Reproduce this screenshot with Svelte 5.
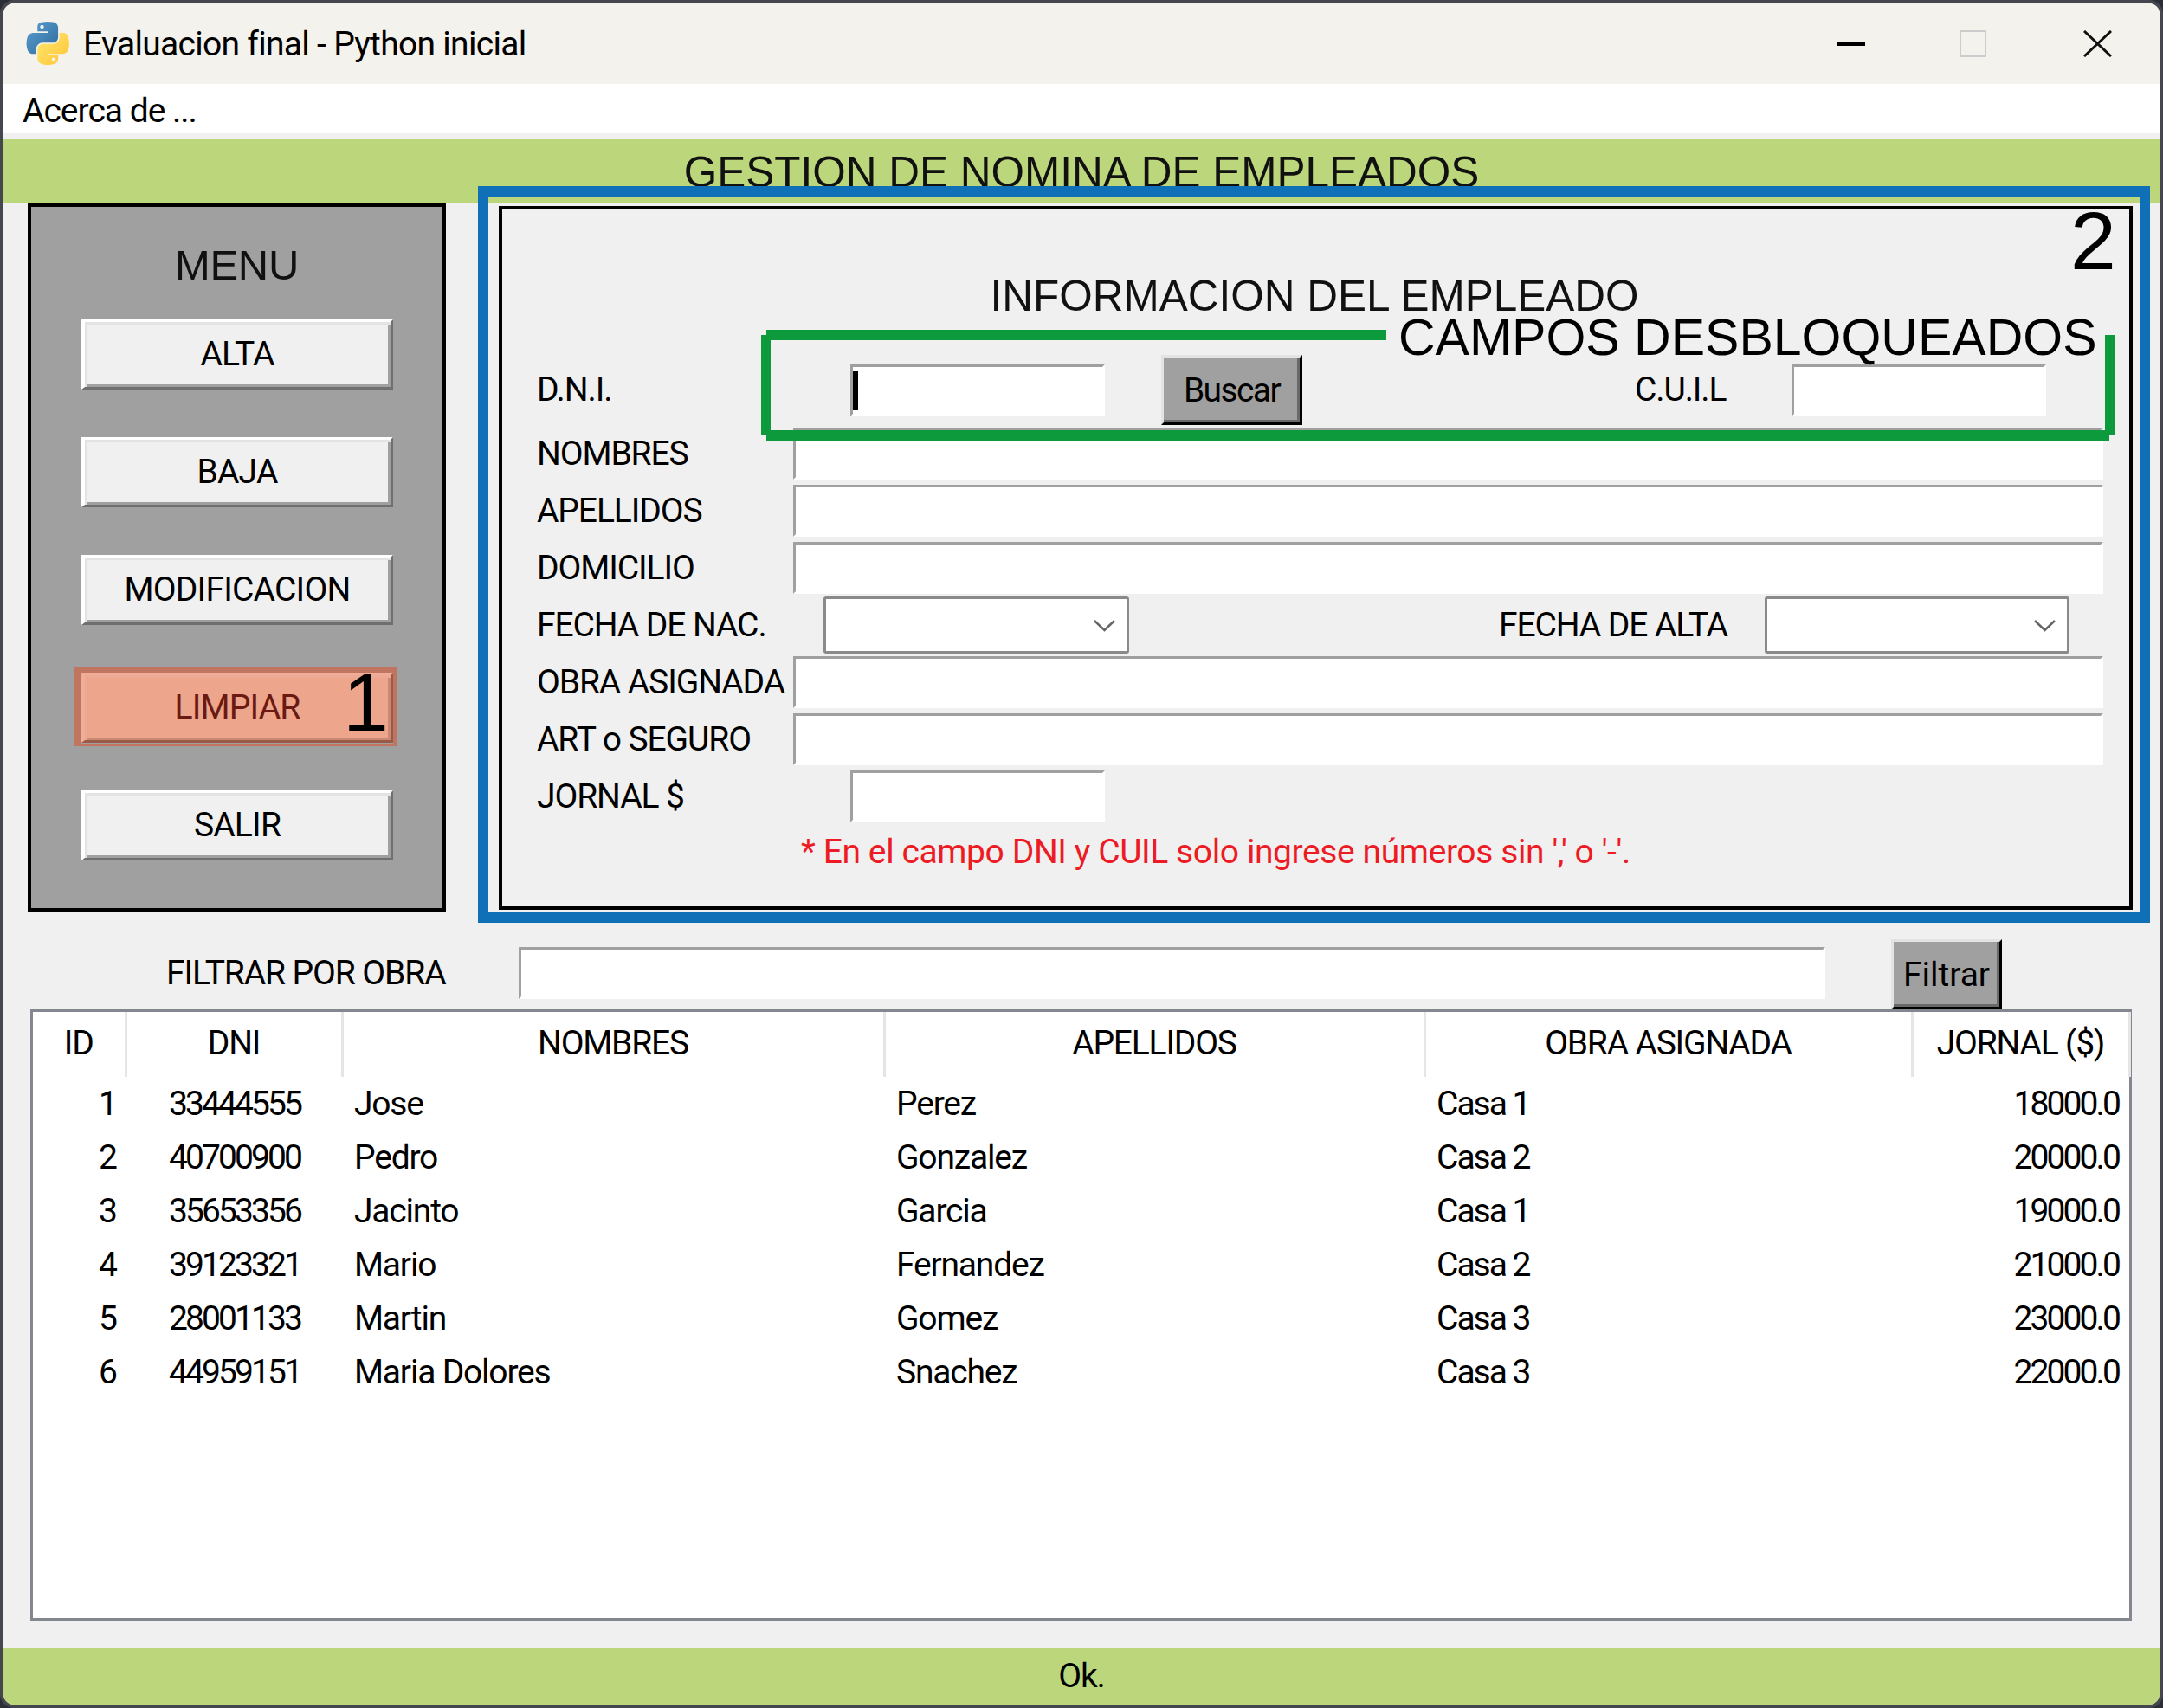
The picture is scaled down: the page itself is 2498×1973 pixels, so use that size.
<script>
  const rows = [
    [1, '33444555', 'Jose', 'Perez', 'Casa 1', '18000.0'],
    [2, '40700900', 'Pedro', 'Gonzalez', 'Casa 2', '20000.0'],
    [3, '35653356', 'Jacinto', 'Garcia', 'Casa 1', '19000.0'],
    [4, '39123321', 'Mario', 'Fernandez', 'Casa 2', '21000.0'],
    [5, '28001133', 'Martin', 'Gomez', 'Casa 3', '23000.0'],
    [6, '44959151', 'Maria Dolores', 'Snachez', 'Casa 3', '22000.0']
  ];
  const menu = ['ALTA', 'BAJA', 'MODIFICACION', 'LIMPIAR', 'SALIR'];
</script>

<div class="stage">
  <div class="window">
    <header class="titlebar">
      <svg class="pylogo" viewBox="0 0 110 110" aria-hidden="true">
        <defs>
          <linearGradient id="pb" x1="0" y1="0" x2="1" y2="1"><stop offset="0" stop-color="#5a9fd4"/><stop offset="1" stop-color="#306998"/></linearGradient>
          <linearGradient id="py" x1="0" y1="0" x2="1" y2="1"><stop offset="0" stop-color="#ffe873"/><stop offset="1" stop-color="#ffc331"/></linearGradient>
        </defs>
        <path fill="url(#pb)" d="M54.9 0.1c-4.5 0-8.8.4-12.6 1.1C31.2 3.1 29.2 7.2 29.2 14.9V25h26.2v3.4H19.4c-7.6 0-14.3 4.6-16.4 13.3C.6 51.7.5 58 3 68.5c1.9 7.8 6.3 13.3 13.9 13.3h9v-12c0-8.7 7.5-16.3 16.4-16.3h26.2c7.3 0 13.1-6 13.1-13.3V14.9c0-7.1-6-12.4-13.1-13.6C63.9.5 59.3.1 54.9.1zM40.7 8.2c2.7 0 4.9 2.2 4.9 5 0 2.7-2.2 4.9-4.9 4.9-2.7 0-4.9-2.2-4.9-4.9 0-2.8 2.2-5 4.9-5z"/>
        <path fill="url(#py)" d="M85 28.4v11.7c0 9-7.7 16.6-16.4 16.6H42.4c-7.2 0-13.1 6.2-13.1 13.3v25c0 7.1 6.2 11.3 13.1 13.3 8.3 2.4 16.2 2.9 26.2 0 6.6-1.9 13.1-5.8 13.1-13.3V85H55.5v-3.3h39.3c7.6 0 10.5-5.3 13.1-13.3 2.7-8.2 2.6-16.1 0-26.6-1.9-7.6-5.5-13.3-13.1-13.3H85zM70.3 91.1c2.7 0 4.9 2.2 4.9 4.9 0 2.8-2.2 5-4.9 5-2.7 0-4.9-2.2-4.9-5 0-2.7 2.2-4.9 4.9-4.9z"/>
      </svg>
      <span class="wintitle">Evaluacion final - Python inicial</span>
      <div class="controls">
        <span class="ctl-min"></span>
        <span class="ctl-max"></span>
        <svg class="ctl-close" viewBox="0 0 33 31" aria-hidden="true"><path d="M1 1 32 30M32 1 1 30" stroke="#111" stroke-width="3" fill="none"/></svg>
      </div>
    </header>

    <nav class="menubar">Acerca de ...</nav>

    <div class="banner"><h1>GESTION DE NOMINA DE EMPLEADOS</h1></div>

    <main class="main">
      <aside class="menu">
        <h2>MENU</h2>
        {#each menu as m}
          <button class="btn" class:hot={m === 'LIMPIAR'}>{m}</button>
        {/each}
      </aside>

      <section class="form">
        <h2 class="ftitle">INFORMACION DEL EMPLEADO</h2>

        <div class="row r-first">
          <label for="dni">D.N.I.</label>
          <span class="caretwrap m-short"><input id="dni" class="entry short" /><i class="caret"></i></span>
          <button class="gbtn buscar">Buscar</button>
          <label class="l-cuil" for="cuil">C.U.I.L</label>
          <input id="cuil" class="entry short" />
        </div>

        <div class="row tight"><label for="nom">NOMBRES</label><input id="nom" class="entry full" /></div>
        <div class="row"><label for="ape">APELLIDOS</label><input id="ape" class="entry full" /></div>
        <div class="row"><label for="dom">DOMICILIO</label><input id="dom" class="entry full" /></div>

        <div class="row tight r-combo">
          <span class="lab">FECHA DE NAC.</span>
          <div class="combo c-nac"><svg viewBox="0 0 25 15" aria-hidden="true"><path d="M1 2 12.500 13 24 2" stroke="#666" stroke-width="2.500" fill="none"/></svg></div>
          <span class="lab l-alta">FECHA DE ALTA</span>
          <div class="combo c-alta"><svg viewBox="0 0 25 15" aria-hidden="true"><path d="M1 2 12.500 13 24 2" stroke="#666" stroke-width="2.500" fill="none"/></svg></div>
        </div>

        <div class="row tight"><label for="obra">OBRA ASIGNADA</label><input id="obra" class="entry full" /></div>
        <div class="row"><label for="art">ART o SEGURO</label><input id="art" class="entry full" /></div>
        <div class="row"><label for="jor">JORNAL $</label><input id="jor" class="entry short m-short" /></div>

        <p class="note">* En el campo DNI y CUIL solo ingrese números sin ',' o '-'.</p>
      </section>
    </main>

    <div class="filter">
      <label for="fil">FILTRAR POR OBRA</label>
      <input id="fil" class="entry" />
      <button class="gbtn filtrar">Filtrar</button>
    </div>

    <div class="tablebox">
      <table>
        <colgroup>
          <col class="c1" /><col class="c2" /><col class="c3" /><col class="c4" /><col class="c5" /><col class="c6" />
        </colgroup>
        <thead>
          <tr><th>ID</th><th>DNI</th><th>NOMBRES</th><th>APELLIDOS</th><th>OBRA ASIGNADA</th><th>JORNAL ($)</th></tr>
        </thead>
        <tbody>
          {#each rows as r}
            <tr>
              <td class="num digits">{r[0]}</td>
              <td class="mid digits">{r[1]}</td>
              <td>{r[2]}</td>
              <td>{r[3]}</td>
              <td class="casa">{r[4]}</td>
              <td class="num digits">{r[5]}</td>
            </tr>
          {/each}
        </tbody>
      </table>
    </div>

    <footer class="status">Ok.</footer>
  </div>

  <div class="a-blue"></div>
  <div class="a-g a-g-top"></div>
  <div class="a-g a-g-left"></div>
  <div class="a-g a-g-bottom"></div>
  <div class="a-g a-g-right"></div>
  <div class="a-text a-campos">CAMPOS DESBLOQUEADOS</div>
  <div class="a-text a-digit a-one">1</div>
  <div class="a-text a-digit a-two">2</div>
</div>

<style>
  :global(body) { margin: 0; background: #2b2e36; }
  .stage { position: relative; width: 2498px; height: 1973px; overflow: hidden; }
  .window {
    box-sizing: border-box; width: 2498px; height: 1973px;
    display: flex; flex-direction: column;
    border: 4px solid #44474d; border-radius: 16px; overflow: hidden;
    background: #f0f0f0; color: #000;
    font-family: Roboto, "Liberation Sans", sans-serif; font-size: 39px; letter-spacing: -1.1px;
  }
  .titlebar { height: 93px; flex: none; display: flex; align-items: center; padding-left: 26px; background: #f4f2ec; box-sizing: border-box; }
  .pylogo { width: 50px; height: 50px; margin-top: -2px; }
  .wintitle { margin-left: 16px; letter-spacing: -0.7px; }
  .controls { margin-left: auto; margin-right: 55px; display: flex; align-items: center; }
  .ctl-min { width: 32px; height: 5px; background: #000; }
  .ctl-max { width: 27px; height: 27px; margin-left: 109px; border: 2px solid #ccc; border-radius: 1px; }
  .ctl-close { width: 33px; height: 31px; margin-left: 112px; }
  .menubar { height: 57px; flex: none; background: #fff; padding-left: 22px; line-height: 62px; margin-bottom: 6px; letter-spacing: -1px; }
  .banner { height: 75px; flex: none; background: #bcd67c; overflow: hidden; text-align: center; letter-spacing: 0; }
  .banner h1 { margin: 0; font: 400 49.5px/1 "Liberation Sans", sans-serif; letter-spacing: 0; padding-top: 14px; color: #111; }

  .main { display: flex; align-items: flex-start; flex: none; }
  .menu {
    box-sizing: border-box; width: 483px; height: 818px; margin-left: 28px;
    border: 4px solid #000; background: #a0a0a0;
    display: flex; flex-direction: column; align-items: center; gap: 55px;
  }
  .menu h2 { margin: 0 0 -55px; height: 130px; font: 400 49px/134px "Liberation Sans", sans-serif; letter-spacing: -0.3px; color: #111; }
  .btn {
    box-sizing: border-box; width: 360px; height: 81px; padding: 0 0 2px; flex: none;
    background: #f0f0f0; color: #000; font: inherit; letter-spacing: -0.8px; position: relative;
    border-style: solid; border-width: 3px 3px 3px 4px; border-color: #fff #6f6f6f #6f6f6f #fff;
    box-shadow: inset 3px 3px 0 #e3e3e3, inset -3px -3px 0 #a0a0a0;
  }
  .btn.hot {
    background: #eda58c; color: #6b1a12;
    border-color: #f0ae98 #9b5a48 #9b5a48 #f0ae98;
    box-shadow: inset 3px 3px 0 #eda993, inset -3px -3px 0 #c98a75;
  }
  .btn.hot::before {
    content: ""; position: absolute; top: -10px; left: -13px; right: -7px; bottom: -7px;
    border-style: solid; border-width: 7px 4px 3px 9px; border-color: #c07560;
  }

  .form {
    box-sizing: border-box; width: 1887px; height: 813px; margin: 3px 0 0 61px;
    border: 4px solid #000; padding-left: 40px;
    display: flex; flex-direction: column;
  }
  .ftitle { margin: 0 0 0 -43px; height: 168px; box-sizing: border-box; padding-top: 75px; text-align: center; font: 400 49.5px/50px "Liberation Sans", sans-serif; letter-spacing: 0; color: #111; }
  .row { display: flex; align-items: center; height: 60px; margin-top: 6px; flex: none; }
  .row.tight { margin-top: 3px; }
  .row.r-first { height: 81px; margin-top: 0; }
  .row.r-combo { height: 66px; }
  .row > label, .lab { flex: none; width: 296px; box-sizing: border-box; padding-bottom: 1px; white-space: nowrap; }
  .entry {
    box-sizing: border-box; display: block; height: 60px; padding: 0; outline: none; font: inherit; flex: none;
    background: #fff; border-style: solid; border-width: 3px; border-color: #a0a0a0 #fff #fff #a0a0a0; border-radius: 0;
  }
  .short { width: 294px; }
  .full { width: 1513px; }
  .m-short { margin-left: 66px; }
  .caretwrap { position: relative; flex: none; display: block; }
  .caret { position: absolute; left: 3px; top: 7px; width: 6px; height: 46px; background: #000; }
  .gbtn {
    box-sizing: border-box; padding: 0; background: #a0a0a0; color: #000; font: inherit; flex: none;
    border-style: solid; border-width: 3px; border-color: #e3e3e3 #000 #000 #e3e3e3;
    box-shadow: inset -3px -3px 0 #696969;
  }
  .buscar { width: 163px; height: 81px; margin-left: 65px; letter-spacing: -1.6px; }
  .row > label.l-cuil { width: 181px; margin-left: 384px; }
  .combo {
    box-sizing: border-box; height: 66px; background: #fff; border: 3px solid #8a8a8a; border-radius: 3px; flex: none;
    display: flex; align-items: center; justify-content: flex-end; padding-right: 13px;
  }
  .combo svg { width: 25px; height: 15px; }
  .c-nac { width: 353px; margin-left: 35px; }
  .c-alta { width: 352px; }
  .row > .l-alta { width: 307px; margin-left: 427px; }
  .note { margin: 10px 0 0 305px; color: #ed1c24; line-height: 48px; white-space: nowrap; letter-spacing: -0.4px; }

  .filter { display: flex; align-items: center; height: 81px; margin-top: 32px; flex: none; padding-left: 188px; }
  .filter label { width: 407px; flex: none; padding-bottom: 3px; white-space: nowrap; }
  .filter .entry { width: 1509px; margin-top: -3px; }
  .filtrar { width: 128px; height: 81px; margin-left: 76px; }

  .tablebox { box-sizing: border-box; width: 2427px; height: 706px; margin-left: 31px; border: 3px solid #848790; background: #fff; flex: none; }
  table { border-collapse: collapse; table-layout: fixed; width: 2421px; }
  .c1 { width: 107px; } .c2 { width: 250px; } .c3 { width: 626px; } .c4 { width: 624px; } .c5 { width: 563px; } .c6 { width: 251px; }
  th { height: 75px; padding: 0 0 3px; box-sizing: border-box; font-weight: 400; letter-spacing: -1.2px; border-right: 3px solid #e5e5e5; text-align: center; white-space: nowrap; }
  td { height: 62px; padding: 0 12px 0 14px; white-space: nowrap; overflow: hidden; box-sizing: border-box; letter-spacing: -1.2px; }
  td.num { text-align: right; }
  td.mid { text-align: center; }
  td.digits { letter-spacing: -2.9px; }
  td.casa { letter-spacing: -2px; }

  .status { flex: 1; margin-top: 32px; background: #bcd67c; text-align: center; line-height: 65px; }

  .a-blue { position: absolute; left: 552px; top: 215px; width: 1931px; height: 851px; box-sizing: border-box; border: 12px solid #0f6fb7; }
  .a-g { position: absolute; background: #0c9a3c; }
  .a-g-top { left: 885px; top: 381px; width: 716px; height: 12px; }
  .a-g-left { left: 879px; top: 387px; width: 11px; height: 116px; }
  .a-g-bottom { left: 885px; top: 497px; width: 1551px; height: 12px; }
  .a-g-right { left: 2431px; top: 387px; width: 12px; height: 116px; }
  .a-text { position: absolute; font-family: "Liberation Sans", sans-serif; color: #000; white-space: nowrap; }
  .a-campos { left: 1615px; top: 356px; font-size: 59px; line-height: 68px; }
  .a-digit { font-size: 95px; line-height: 95px; }
  .a-one { left: 396px; top: 764px; }
  .a-two { left: 2391px; top: 231px; }
</style>
